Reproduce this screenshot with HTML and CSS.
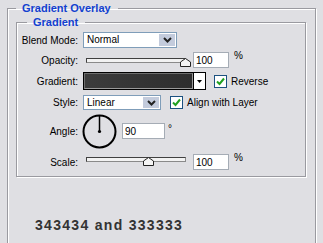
FILE: index.html
```html
<!DOCTYPE html>
<html lang="en">
<head>
    <meta charset="UTF-8">
    <title>Gradient Overlay</title>
    <link rel="stylesheet" href="styles.css">
</head>
<body>
<fieldset class="group outer">
    <legend>Gradient Overlay</legend>
    <fieldset class="group inner">
        <legend>Gradient</legend>

        <div class="row row-blend">
            <span class="label">Blend Mode:</span>
            <div class="combo combo-blend">
                <span class="combo-value">Normal</span>
                <span class="combo-button">
                    <svg width="9" height="6" viewBox="0 0 9 6"><polyline points="1,1 4.5,4.5 8,1" fill="none" stroke="#222" stroke-width="2"/></svg>
                </span>
            </div>
        </div>

        <div class="row row-opacity">
            <span class="label">Opacity:</span>
            <div class="slider slider-opacity">
                <div class="track"></div>
                <svg class="thumb" style="left: 97px" width="11" height="9" viewBox="0 0 11 9"><polygon points="0.5,4 5.5,0.5 10.5,4 10.5,8.5 0.5,8.5" fill="#f4f4f4" stroke="#222"/></svg>
            </div>
            <input class="field" type="text" value="100">
            <span class="unit">%</span>
        </div>

        <div class="row row-gradient">
            <span class="label">Gradient:</span>
            <div class="picker">
                <div class="swatch"></div>
                <span class="picker-button">
                    <svg width="5" height="3" viewBox="0 0 5 3"><polygon points="0,0 5,0 2.5,3" fill="#000"/></svg>
                </span>
            </div>
            <span class="check check-reverse">
                <svg width="9" height="9" viewBox="0 0 9 9"><polyline points="1,4.5 3.5,7 8,1.5" fill="none" stroke="#21a121" stroke-width="2"/></svg>
            </span>
            <span class="check-text">Reverse</span>
        </div>

        <div class="row row-style">
            <span class="label">Style:</span>
            <div class="combo combo-style">
                <span class="combo-value">Linear</span>
                <span class="combo-button">
                    <svg width="9" height="6" viewBox="0 0 9 6"><polyline points="1,1 4.5,4.5 8,1" fill="none" stroke="#222" stroke-width="2"/></svg>
                </span>
            </div>
            <span class="check check-align">
                <svg width="9" height="9" viewBox="0 0 9 9"><polyline points="1,4.5 3.5,7 8,1.5" fill="none" stroke="#21a121" stroke-width="2"/></svg>
            </span>
            <span class="check-text">Align with Layer</span>
        </div>

        <div class="row row-angle">
            <span class="label">Angle:</span>
            <svg class="dial" width="35" height="35" viewBox="0 0 35 35">
                <circle cx="17.5" cy="17.5" r="16" fill="none" stroke="#000" stroke-width="2"/>
                <line x1="17.5" y1="17.5" x2="17.5" y2="2" stroke="#000" stroke-width="1.5"/>
                <circle cx="17.5" cy="17.5" r="1.6" fill="#000"/>
            </svg>
            <input class="field field-angle" type="text" value="90">
            <span class="unit unit-degree">°</span>
        </div>

        <div class="row row-scale">
            <span class="label">Scale:</span>
            <div class="slider slider-scale">
                <div class="track"></div>
                <svg class="thumb" style="left: 60px" width="11" height="9" viewBox="0 0 11 9"><polygon points="0.5,4 5.5,0.5 10.5,4 10.5,8.5 0.5,8.5" fill="#f4f4f4" stroke="#222"/></svg>
            </div>
            <input class="field" type="text" value="100">
            <span class="unit">%</span>
        </div>
    </fieldset>

    <p class="caption">343434 and 333333</p>
</fieldset>
</body>
</html>
```

FILE: styles.css
```css
html,
body {
    overflow: hidden;
}

body {
    margin: 0;
    background-color: #dfdfe3;
    font-family: "Liberation Sans", Arial, sans-serif;
    font-size: 10px;
    color: #000;
}

.group {
    margin: 0;
    padding: 0;
    min-width: 0;
    box-sizing: border-box;
    border: 1px solid #9a9aa0;
    box-shadow: 1px 1px 0 #fff, inset 1px 1px 0 #fff;
}

.group legend {
    padding: 0 7px 0 6px;
    color: #1241d0;
    font-size: 11px;
    font-weight: bold;
}

.outer {
    width: 309px;
    height: 243px;
    margin: 1px 0 0 7px;
    padding: 0 9px 0 8px;
}

.outer > legend {
    line-height: 15px;
}

.inner {
    width: 290px;
    padding: 3px 0 6px 0;
}

.inner > legend {
    margin-left: 10px;
    line-height: 13px;
}

.row {
    display: flex;
    align-items: center;
    height: 16px;
    margin-top: 4px;
}

.row-blend {
    margin-top: 0;
}

.row-gradient {
    height: 18px;
}

.row-style {
    height: 15px;
    margin-top: 5px;
}

.row-angle {
    height: 34px;
}

.row-scale {
    margin-top: 6px;
}

.label {
    flex: none;
    width: 61px;
    margin-right: 5px;
    text-align: right;
    white-space: nowrap;
}

/* combo box */
.combo {
    display: flex;
    height: 100%;
    box-sizing: border-box;
    border: 1px solid #7f9db9;
    background-color: #fff;
}

.combo-blend {
    width: 94px;
}

.combo-style {
    width: 78px;
}

.combo-value {
    flex: 1;
    padding-left: 3px;
    line-height: 14px;
}

.combo-button {
    display: flex;
    align-items: center;
    justify-content: center;
    width: 16px;
    margin: 1px;
    background-color: #c3cbdc;
}

/* slider */
.slider {
    position: relative;
    align-self: flex-start;
    width: 107px;
    height: 14px;
}

.slider-opacity {
    margin-top: 6px;
}

.slider-scale {
    margin-top: 3px;
}

.track {
    width: 100px;
    height: 5px;
    margin-left: 3px;
    box-sizing: border-box;
    border: 1px solid #404040;
    border-bottom-color: #8a8a8a;
    border-right-color: #8a8a8a;
    background-color: #f2f2f2;
}

.thumb {
    position: absolute;
    top: 0;
}

.field {
    width: 36px;
    height: 16px;
    margin: 0 0 0 3px;
    padding: 0 0 0 2px;
    box-sizing: border-box;
    border: 1px solid #a5acb5;
    background-color: #fff;
    font-family: inherit;
    font-size: 10px;
    color: #000;
}

.field-angle {
    width: 43px;
    margin-left: 5px;
}

.unit {
    align-self: flex-start;
    margin-left: 5px;
    line-height: 8px;
}

.unit-degree {
    margin-top: 11px;
    margin-left: 3px;
}

/* gradient picker */
.picker {
    display: flex;
    width: 123px;
    height: 18px;
    box-sizing: border-box;
    border: 1px solid #000;
}

.swatch {
    flex: 1;
    border: 1px solid #6e6e6e;
    border-right-color: #9a9a9a;
    border-bottom-color: #9a9a9a;
    background: linear-gradient(to right, #3c3c3c, #333333 60%, #2e2e2e);
}

.picker-button {
    display: flex;
    align-items: center;
    justify-content: center;
    width: 11px;
    border-left: 1px solid #000;
    background-color: #fff;
}

/* checkboxes */
.check {
    display: flex;
    align-items: center;
    justify-content: center;
    width: 13px;
    height: 13px;
    box-sizing: border-box;
    border: 1px solid #1c5180;
    background-color: #fff;
}

.check-reverse {
    margin-left: 8px;
}

.check-align {
    margin-left: 9px;
}

.check-text {
    margin-left: 4px;
    white-space: nowrap;
}

.dial {
    flex: none;
    margin-left: -1px;
}

.caption {
    margin: 40px 0 0 19px;
    font-size: 14px;
    font-weight: bold;
    line-height: 16px;
    letter-spacing: 1.3px;
    color: #333;
}
```
